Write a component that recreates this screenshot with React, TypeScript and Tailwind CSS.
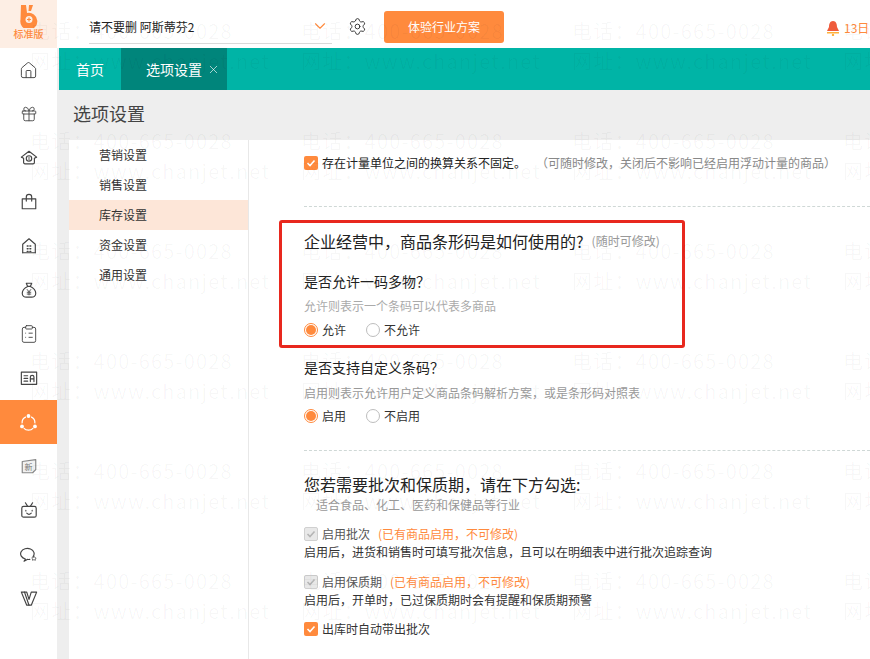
import { ChevronDown, ClipboardList, Gift, House, Settings, X } from "lucide-react";
import type { ReactNode } from "react";

const MENU = ["营销设置", "销售设置", "库存设置", "资金设置", "通用设置"];

function Svg({ children }: { children: ReactNode }) {
  return (
    <svg width="18" height="18" viewBox="0 0 20 20" fill="none" stroke="currentColor" strokeWidth="1.300" strokeLinejoin="round" strokeLinecap="round">
      {children}
    </svg>
  );
}

const ICONS: ReactNode[] = [
  <House key="home" size={19} strokeWidth={1.200} />,
  <Gift key="gift" size={18} strokeWidth={1.200} />,
  <Svg key="shop">
    <path d="M10 2.500 18.500 9l-2.500 1.200V15a1.500 1.500 0 0 1-1.500 1.500h-9A1.500 1.500 0 0 1 4 15v-4.800L1.500 9z" />
    <circle cx="10" cy="10.500" r="3" />
    <path d="M10 9v3" strokeWidth="1" />
  </Svg>,
  <Svg key="bag">
    <path d="M2.500 6.500h15v11h-15z" />
    <path d="M7 9V4.500a3 3 0 0 1 6 0V9" />
  </Svg>,
  <Svg key="store">
    <path d="M3 17.500V8l7-6 7 6v9.500" />
    <path d="M3 17.500h14" />
    <path d="M8 10h1M11 10h1M8 13h1M11 13h1M8 16h1M11 16h1" strokeWidth="1.500" />
  </Svg>,
  <Svg key="money">
    <path d="M7 2.500h6l-1.500 3.500h-3z" />
    <path d="M8.500 6C4.500 8 2.500 11 2.500 13.500 2.500 16.500 5 18 7 18h6c2 0 4.500-1.500 4.500-4.500C17.500 11 15.500 8 11.500 6" />
    <path d="m8 9.500 2 2.500 2-2.500M10 12v3.500M8 12.500h4M8 14.500h4" strokeWidth="1" />
  </Svg>,
  <ClipboardList key="clip" size={20} strokeWidth={1.100} />,
  <Svg key="card">
    <path d="M1.500 3.500h17v13.500h-17z" />
    <path d="M4.500 7.500h4M4.500 10.500h4M4.500 13.500h4" />
    <path d="M11.500 14v-5a2 2 0 0 1 4 0v5M11.500 11h4" />
  </Svg>,
  <svg key="cycle" width="19" height="19" viewBox="0 0 22 22" fill="none" stroke="#fff" strokeWidth="1.400">
    <path d="M8 4.500A7.500 7.500 0 0 0 3.600 12M14 4.500A7.500 7.500 0 0 1 18.400 12M5.500 17.500a7.500 7.500 0 0 0 11 0" />
    <circle cx="11" cy="3.500" r="2.200" fill="#fff" stroke="none" />
    <circle cx="3.500" cy="15.500" r="2.200" fill="#fff" stroke="none" />
    <circle cx="18.500" cy="15.500" r="2.200" fill="#fff" stroke="none" />
  </svg>,
  <Svg key="new">
    <path d="M2.500 5l15-2v11l-3.500 3.500H2.500z" fill="#f1f1f1" stroke="#888" />
    <text x="5" y="14" fontSize="9" fill="#777" stroke="none">新</text>
  </Svg>,
  <Svg key="tv">
    <path d="M4 6h12a2 2 0 0 1 2 2v8a2 2 0 0 1-2 2H4a2 2 0 0 1-2-2V8a2 2 0 0 1 2-2z" />
    <path d="M6 2l2.500 4M14 2l-2.500 4" />
    <path d="M6.500 10.500v.500M13.500 10.500v.500M7.500 13.500c1.500 1.500 3.500 1.500 5 0" />
  </Svg>,
  <Svg key="chat">
    <path d="M14.500 13A7.500 6 0 1 0 6 15.500l-1.500 2.500 3.500-2c1 .2 2 .1 3-.1" />
    <path d="M15.500 12.500l1 1.500 1.500.5-1 1 .100 1.500-1.600-.7-1.600.7.100-1.500-1-1 1.500-.5z" strokeWidth="0.800" />
  </Svg>,
  <Svg key="vip">
    <path d="M1.500 3.500h6l2.500 8 2.500-8h6L12.500 18h-5z" />
    <path d="M5 3.500 10 18" />
  </Svg>,
];

function Radio({ checked, label }: { checked?: boolean; label: string }) {
  return (
    <span className="flex items-center gap-[4px] mr-[20px]">
      <span className={`w-[14px] h-[14px] rounded-full border flex items-center justify-center ${checked ? "border-[#ff8a3d]" : "border-[#bdbdbd]"}`}>
        {checked && <span className="w-[10px] h-[10px] rounded-full bg-[#ff8a3d]" />}
      </span>
      {label}
    </span>
  );
}

function Check({ disabled }: { disabled?: boolean }) {
  return (
    <span className={`w-[14px] h-[14px] rounded-[2px] flex items-center justify-center mr-[4px] ${disabled ? "bg-[#e8e8e8] border border-[#d0d0d0]" : "bg-[#ff8a3d]"}`}>
      <svg width="10" height="10" viewBox="0 0 10 10" fill="none" stroke={disabled ? "#b5b5b5" : "#fff"} strokeWidth="1.600">
        <path d="M1.500 5 4 7.500 8.500 2.500" />
      </svg>
    </span>
  );
}

export default function App() {
  return (
    <div
      className="relative w-[870px] h-[659px] overflow-hidden flex bg-white text-[12px] text-[#333]"
      style={{ fontFamily: '"Noto Sans CJK SC", "Liberation Sans", sans-serif' }}
    >
      <aside className="w-[57px] shrink-0 flex flex-col">
        <div className="h-[48px] bg-[#fdeee4] flex flex-col items-center pt-[4px]">
          <svg width="18" height="24" viewBox="0 0 18 24">
            <path d="M1 1h5l1 8a8.500 8.500 0 1 1-6.500 6.500z" fill="#ff8a3d" />
            <path d="M9 1h4l-2 6H8.500z" fill="#ff8a3d" />
            <circle cx="9" cy="15.500" r="3.500" fill="#fdeee4" />
            <path d="M9 13.500v4M7 15.500h4" stroke="#ff8a3d" strokeWidth="1.200" />
          </svg>
          <span className="text-[10px] leading-[12px] text-[#ff8a3d] font-medium">标准版</span>
        </div>
        {ICONS.map((icon, i) => (
          <div key={i} className={`h-[44px] shrink-0 flex items-center justify-center ${i === 8 ? "bg-[#ff8a3d]" : "text-[#444]"}`}>
            {icon}
          </div>
        ))}
      </aside>

      <div className="flex-1 min-w-0 flex flex-col bg-[#eeeeee]">
        <header className="h-[48px] shrink-0 bg-white flex items-start relative whitespace-nowrap">
          <div className="ml-[32px] mt-[16px] w-[243px] h-[28px] border-b border-[#d9d9d9] flex justify-between text-[#222] leading-[22px]">
            <span>请不要删 阿斯蒂芬2</span>
            <ChevronDown size={18} strokeWidth={1.500} className="text-[#ff8a3d] mr-[3px] mt-[1px]" />
          </div>
          <Settings size={19} strokeWidth={1.200} className="ml-[16px] mt-[17px] text-[#333]" />
          <button className="ml-[17px] mt-[11px] w-[120px] h-[32px] bg-[#ff8a3d] rounded-[3px] text-white">体验行业方案</button>
          <span className="ml-[322px] mt-[20px] flex items-center gap-[4px] text-[#ff8a3d] leading-[16px]">
            <svg width="14" height="16" viewBox="0 0 14 16">
              <path d="M7 1c3 0 4 3 4 6l2 4H1l2-4c0-3 1-6 4-6z" fill="#ef5b3c" />
              <path d="M1 12h12v1.500H1z" fill="#ffb03a" />
              <circle cx="7" cy="15" r="1.200" fill="#ffb03a" />
            </svg>
            13日
          </span>
        </header>

        <nav className="h-[42px] shrink-0 ml-[2px] bg-[#00b4a6] flex text-[14px] text-white">
          <span className="w-[62px] flex items-center justify-center">首页</span>
          <span className="w-[106px] bg-[#00857b] flex items-center pl-[25px] gap-[5px]">
            选项设置 <X size={13} strokeWidth={1.200} />
          </span>
        </nav>

        <div className="h-[50px] shrink-0 flex items-center pl-[16px] pb-[3px] text-[18px] text-[#444]">选项设置</div>

        <div className="flex-1 min-h-0 flex ml-[12px]">
          <ul className="w-[180px] shrink-0 bg-white border-r border-[#e8e8e8]">
            {MENU.map((m, i) => (
              <li key={m} className={`h-[30px] flex items-center pl-[30px] ${i === 2 ? "bg-[#fde6d8]" : ""}`}>{m}</li>
            ))}
          </ul>

          <main className="flex-1 min-w-0 bg-white pl-[55px] pt-[14px] whitespace-nowrap">
            <div className="h-[18px] flex items-center">
              <Check />
              <span className="text-[#222]">存在计量单位之间的换算关系不固定。</span>
              <span className="ml-[10px] text-[#888]">（可随时修改，关闭后不影响已经启用浮动计量的商品）</span>
            </div>
            <div className="mt-[34px] border-t border-dashed border-[#cfd8d6]" />

            <div className="mt-[24px] h-[20px] flex items-center text-[16px] text-[#222]">
              企业经营中，商品条形码是如何使用的?
              <span className="ml-[8px] text-[12px] text-[#999]">(随时可修改)</span>
            </div>
            <div className="mt-[20px] h-[20px] flex items-center text-[14px] text-[#222]">是否允许一码多物？</div>
            <div className="mt-[6px] h-[18px] flex items-center text-[#aaa]">允许则表示一个条码可以代表多商品</div>
            <div className="mt-[6px] h-[18px] flex items-center">
              <Radio checked label="允许" />
              <Radio label="不允许" />
            </div>

            <div className="mt-[18px] h-[20px] flex items-center text-[14px] text-[#222]">是否支持自定义条码？</div>
            <div className="mt-[7px] h-[18px] flex items-center text-[#999]">启用则表示允许用户定义商品条码解析方案，或是条形码对照表</div>
            <div className="mt-[5px] h-[18px] flex items-center">
              <Radio checked label="启用" />
              <Radio label="不启用" />
            </div>
            <div className="mt-[25px] border-t border-dashed border-[#cfd8d6]" />

            <div className="mt-[23px] h-[20px] flex items-center text-[16px] text-[#222]">您若需要批次和保质期，请在下方勾选:</div>
            <div className="mt-[2px] h-[18px] flex items-center pl-[12px] text-[#999]">适合食品、化工、医药和保健品等行业</div>

            <div className="mt-[12px] h-[16px] flex items-center">
              <Check disabled />
              <span className="text-[#555]">启用批次</span>
              <span className="ml-[8px] text-[#ff8a3d]">(已有商品启用，不可修改)</span>
            </div>
            <div className="mt-[2px] h-[16px] flex items-center">启用后，进货和销售时可填写批次信息，且可以在明细表中进行批次追踪查询</div>
            <div className="mt-[14px] h-[16px] flex items-center">
              <Check disabled />
              <span className="text-[#555]">启用保质期</span>
              <span className="ml-[8px] text-[#ff8a3d]">(已有商品启用，不可修改)</span>
            </div>
            <div className="mt-[2px] h-[16px] flex items-center">启用后，开单时，已过保质期时会有提醒和保质期预警</div>
            <div className="mt-[13px] h-[16px] flex items-center">
              <Check />
              出库时自动带出批次
            </div>
          </main>
        </div>
      </div>

      {/* annotation box drawn on top of the page */}
      <div className="absolute left-[279px] top-[220px] w-[406px] h-[128px] border-[3px] border-[#e8281e] rounded-[3px] pointer-events-none" />

      {/* watermark */}
      <div className="absolute left-[30px] top-[16px] w-[1100px] flex flex-wrap pointer-events-none text-[20px] leading-[30px] tracking-[1.200px] text-black/[0.035] whitespace-nowrap">
        {Array.from({ length: 24 }).map((_, i) => (
          <div key={i} className="w-[271px] h-[110px]">
            <div>电话：400-665-0028</div>
            <div>网址：www.chanjet.net</div>
          </div>
        ))}
      </div>
    </div>
  );
}
